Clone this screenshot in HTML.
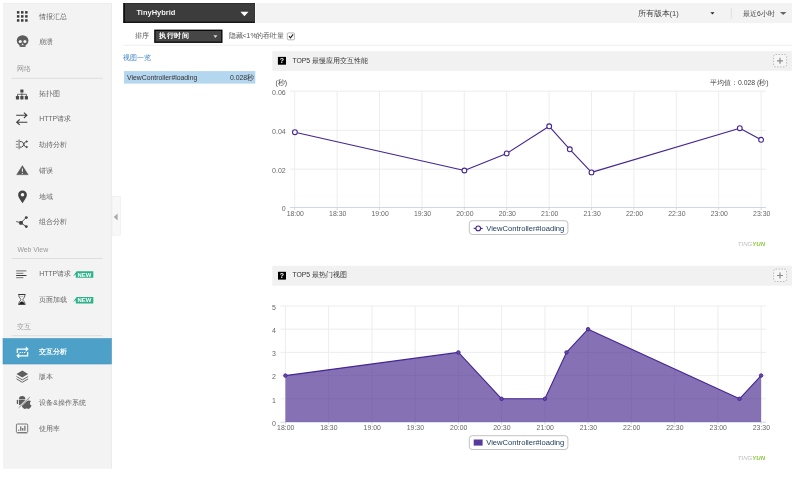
<!DOCTYPE html>
<html lang="zh">
<head>
<meta charset="utf-8">
<title>TinyHybrid</title>
<style>
html,body{margin:0;padding:0;background:#fff;}
body{width:796px;height:481px;overflow:hidden;position:relative;font-family:"Liberation Sans",sans-serif;font-size:6.85px;color:#666;}
#root{position:absolute;left:0;top:0;width:796px;height:481px;will-change:transform;}
.j{text-align:justify;text-align-last:justify;}
.a{position:absolute;white-space:nowrap;line-height:10px;height:10px;}
.nav{position:absolute;left:39.2px;white-space:nowrap;line-height:10px;height:10px;color:#666;font-size:6.85px;}
.sec{position:absolute;left:17.4px;white-space:nowrap;line-height:10px;height:10px;color:#999;font-size:6.85px;}
.ic{position:absolute;overflow:visible;}
.q{position:absolute;left:278px;width:8px;height:7.8px;color:#fff;font-weight:bold;font-size:7px;line-height:8px;text-align:center;}
svg text{font-family:"Liberation Sans",sans-serif;}
</style>
</head>
<body>
<div id="root">
<svg id="bg" class="ic" style="left:0;top:0" width="796" height="481" viewBox="0 0 796 481">
<rect x="3" y="3" width="109.00" height="465.80" fill="#f3f3f3" />
<rect x="3" y="3" width="109.00" height="0.70" fill="#ececec" />
<rect x="111.3" y="3" width="0.70" height="465.80" fill="#e9e9e9" />
<rect x="11.6" y="77.85" width="90.90" height="0.90" fill="#dcdcdc" />
<rect x="11.6" y="258.05" width="90.90" height="0.90" fill="#dcdcdc" />
<rect x="11.6" y="335.25" width="90.90" height="0.90" fill="#dcdcdc" />
<rect x="3" y="338.6" width="108.30" height="25.40" fill="#4da0c7" stroke="#3d92bf" stroke-width="0.6"/>
<rect x="112" y="196.4" width="8.40" height="38.80" fill="#f8f8f8" stroke="#ebebeb" stroke-width="0.6"/>
<rect x="123.4" y="3.1" width="668.70" height="20.00" fill="#f3f3f3" />
<rect x="255" y="3.1" width="0.90" height="20.00" fill="#fafafa" />
<rect x="123.4" y="3.0" width="131.50" height="19.80" fill="#3c3c3c" />
<rect x="123.4" y="3.0" width="1.40" height="19.80" fill="#050505" />
<rect x="123.4" y="21.7" width="131.50" height="1.10" fill="#050505" />
<rect x="123.4" y="3.0" width="131.50" height="0.50" fill="#222" />
<rect x="254.2" y="3.0" width="0.70" height="19.80" fill="#2a2a2a" />
<rect x="730.8" y="7.8" width="0.80" height="10.80" fill="#d9d9d9" />
<rect x="154.2" y="29.6" width="68.30" height="13.30" fill="#050505" />
<rect x="155.5" y="30.9" width="65.70" height="10.70" fill="#464646" />
<rect x="123.4" y="44.8" width="668.70" height="0.80" fill="#e9e9e9" />
<rect x="287.3" y="32.9" width="7.10" height="6.90" fill="#fdfdfd" stroke="#9a9a9a" stroke-width="0.7" rx="0.8"/>
<rect x="124" y="71.1" width="131.30" height="12.50" fill="#b4d6ef" />
<rect x="272.3" y="51.2" width="519.80" height="19.60" fill="#f1f1f1" />
<rect x="272.3" y="265.8" width="519.80" height="19.90" fill="#f1f1f1" />
<rect x="277.9" y="56.9" width="8.10" height="7.80" fill="#000" />
<rect x="278" y="271.8" width="8.00" height="7.80" fill="#000" />
<rect x="773.6" y="54.5" width="13" height="12.4" rx="2" fill="#f6f6f6" stroke="#a8a8a8" stroke-width="0.8" stroke-dasharray="1.4 1.5"/>
<rect x="773.6" y="269.09999999999997" width="13" height="12.4" rx="2" fill="#f6f6f6" stroke="#a8a8a8" stroke-width="0.8" stroke-dasharray="1.4 1.5"/>
</svg>
<!-- SIDEBAR -->

<div class="nav j" style="top:11.6px;width:26.9px">情报汇总</div>
<div class="nav j" style="top:37.3px;width:13.2px">崩溃</div>
<div class="sec j" style="top:64.1px;width:13.2px">网络</div>
<div class="nav j" style="top:88.6px;width:20.1px">拓扑图</div>
<div class="nav j" style="top:114.0px;width:31.1px">HTTP请求</div>
<div class="nav j" style="top:140.4px;width:27.1px">劫持分析</div>
<div class="nav j" style="top:165.8px;width:13.3px">错误</div>
<div class="nav j" style="top:191.9px;width:13.3px">地域</div>
<div class="nav j" style="top:217.4px;width:27.1px">组合分析</div>
<div class="sec" style="top:244.5px;font-size:6.9px">Web View</div>
<div class="nav j" style="top:268.8px;width:31.1px">HTTP请求</div>
<div class="nav j" style="top:295.0px;width:27.4px">页面加载</div>
<div class="sec j" style="top:322px;width:13.3px">交互</div>
<div class="nav j" style="top:346.5px;color:#fff;font-weight:bold;width:27.4px">交互分析</div>
<div class="nav j" style="top:372.2px;width:13.6px">版本</div>
<div class="nav j" style="top:397.7px;width:45.7px">设备&amp;操作系统</div>
<div class="nav j" style="top:423.7px;width:20.1px">使用率</div>

<!-- TOP BAR -->
<div class="a" style="left:136.4px;top:8.3px;color:#fff;font-weight:bold;font-size:7.5px;text-shadow:0 -0.5px 0 #000;">TinyHybrid</div>
<div class="a j" style="left:637.5px;top:8.9px;color:#444;font-size:7.5px;width:39.5px">所有版本(1)</div>
<div class="a j" style="left:743px;top:8.6px;color:#444;font-size:6.85px;width:30.5px">最近6小时</div>

<!-- FILTER ROW -->
<div class="a j" style="left:135px;top:31.2px;color:#555;width:13px">排序</div>
<div class="a j" style="left:159px;top:31.2px;color:#fff;font-weight:bold;font-size:7.4px;width:30px">执行时间</div>
<div class="a j" style="left:228.6px;top:31.2px;color:#555;width:55.2px">隐藏&lt;1%的吞吐量</div>

<!-- LIST -->
<div class="a j" style="left:123.4px;top:52.7px;color:#3d84c6;width:27.2px">视图一览</div>
<div class="a" style="left:127px;top:72.6px;color:#333;">ViewController#loading</div>
<div class="a j" style="left:230.0px;top:72.6px;color:#333;width:23.7px">0.028秒</div>

<!-- PANEL 1 -->
<div class="q" style="top:57px">?</div>
<div class="a j" style="left:292.4px;top:55.8px;color:#333;width:73.6px">TOP5 最慢应用交互性能</div>
<div class="a j" style="left:275.6px;top:77.6px;color:#444;width:10.8px">(秒)</div>
<div class="a j" style="left:710.0px;top:77.5px;color:#444;width:58px">平均值：0.028 (秒)</div>

<!-- PANEL 2 -->
<div class="q" style="top:271.8px">?</div>
<div class="a j" style="left:292.4px;top:270.2px;color:#333;width:53.5px">TOP5 最热门视图</div>

<svg id="g" class="ic" style="left:0;top:0" width="796" height="481" viewBox="0 0 796 481">
<g shape-rendering="auto">
<line x1="290" x2="766" y1="169.2" y2="169.2" stroke="#e9e9e9" stroke-width="0.8"/>
<line x1="290" x2="766" y1="130.3" y2="130.3" stroke="#e9e9e9" stroke-width="0.8"/>
<line x1="290" x2="766" y1="91.2" y2="91.2" stroke="#e9e9e9" stroke-width="0.8"/>
<line x1="294.7" x2="294.7" y1="91.2" y2="207.5" stroke="#e9e9e9" stroke-width="0.8"/>
<line x1="294.7" x2="294.7" y1="207.5" y2="210" stroke="#c0d0e0" stroke-width="0.7"/>
<line x1="337.1" x2="337.1" y1="91.2" y2="207.5" stroke="#e9e9e9" stroke-width="0.8"/>
<line x1="337.1" x2="337.1" y1="207.5" y2="210" stroke="#c0d0e0" stroke-width="0.7"/>
<line x1="379.5" x2="379.5" y1="91.2" y2="207.5" stroke="#e9e9e9" stroke-width="0.8"/>
<line x1="379.5" x2="379.5" y1="207.5" y2="210" stroke="#c0d0e0" stroke-width="0.7"/>
<line x1="421.9" x2="421.9" y1="91.2" y2="207.5" stroke="#e9e9e9" stroke-width="0.8"/>
<line x1="421.9" x2="421.9" y1="207.5" y2="210" stroke="#c0d0e0" stroke-width="0.7"/>
<line x1="464.3" x2="464.3" y1="91.2" y2="207.5" stroke="#e9e9e9" stroke-width="0.8"/>
<line x1="464.3" x2="464.3" y1="207.5" y2="210" stroke="#c0d0e0" stroke-width="0.7"/>
<line x1="506.7" x2="506.7" y1="91.2" y2="207.5" stroke="#e9e9e9" stroke-width="0.8"/>
<line x1="506.7" x2="506.7" y1="207.5" y2="210" stroke="#c0d0e0" stroke-width="0.7"/>
<line x1="549.1" x2="549.1" y1="91.2" y2="207.5" stroke="#e9e9e9" stroke-width="0.8"/>
<line x1="549.1" x2="549.1" y1="207.5" y2="210" stroke="#c0d0e0" stroke-width="0.7"/>
<line x1="591.5" x2="591.5" y1="91.2" y2="207.5" stroke="#e9e9e9" stroke-width="0.8"/>
<line x1="591.5" x2="591.5" y1="207.5" y2="210" stroke="#c0d0e0" stroke-width="0.7"/>
<line x1="633.9" x2="633.9" y1="91.2" y2="207.5" stroke="#e9e9e9" stroke-width="0.8"/>
<line x1="633.9" x2="633.9" y1="207.5" y2="210" stroke="#c0d0e0" stroke-width="0.7"/>
<line x1="676.3" x2="676.3" y1="91.2" y2="207.5" stroke="#e9e9e9" stroke-width="0.8"/>
<line x1="676.3" x2="676.3" y1="207.5" y2="210" stroke="#c0d0e0" stroke-width="0.7"/>
<line x1="718.7" x2="718.7" y1="91.2" y2="207.5" stroke="#e9e9e9" stroke-width="0.8"/>
<line x1="718.7" x2="718.7" y1="207.5" y2="210" stroke="#c0d0e0" stroke-width="0.7"/>
<line x1="761.1" x2="761.1" y1="91.2" y2="207.5" stroke="#e9e9e9" stroke-width="0.8"/>
<line x1="761.1" x2="761.1" y1="207.5" y2="210" stroke="#c0d0e0" stroke-width="0.7"/>
<line x1="290" x2="766" y1="207.5" y2="207.5" stroke="#c0d0e0" stroke-width="0.8"/>
<text x="295.3" y="215.5" text-anchor="middle" font-size="6.9" fill="#666">18:00</text>
<text x="337.7" y="215.5" text-anchor="middle" font-size="6.9" fill="#666">18:30</text>
<text x="380.1" y="215.5" text-anchor="middle" font-size="6.9" fill="#666">19:00</text>
<text x="422.5" y="215.5" text-anchor="middle" font-size="6.9" fill="#666">19:30</text>
<text x="464.9" y="215.5" text-anchor="middle" font-size="6.9" fill="#666">20:00</text>
<text x="507.3" y="215.5" text-anchor="middle" font-size="6.9" fill="#666">20:30</text>
<text x="549.7" y="215.5" text-anchor="middle" font-size="6.9" fill="#666">21:00</text>
<text x="592.1" y="215.5" text-anchor="middle" font-size="6.9" fill="#666">21:30</text>
<text x="634.5" y="215.5" text-anchor="middle" font-size="6.9" fill="#666">22:00</text>
<text x="676.9" y="215.5" text-anchor="middle" font-size="6.9" fill="#666">22:30</text>
<text x="719.3" y="215.5" text-anchor="middle" font-size="6.9" fill="#666">23:00</text>
<text x="761.7" y="215.5" text-anchor="middle" font-size="6.9" fill="#666">23:30</text>
<text x="285.7" y="211.0" text-anchor="end" font-size="7" fill="#666">0</text>
<text x="285.7" y="172.7" text-anchor="end" font-size="7" fill="#666">0.02</text>
<text x="285.7" y="133.8" text-anchor="end" font-size="7" fill="#666">0.04</text>
<text x="285.7" y="94.7" text-anchor="end" font-size="7" fill="#666">0.06</text>
<polyline points="294.9,132.2 464.4,170.5 506.7,153.4 549.2,126.3 569.8,149.3 591.5,172.4 739.8,128.2 761.1,139.8" fill="none" stroke="#442594" stroke-width="1.1" stroke-linejoin="round"/>
<circle cx="294.9" cy="132.2" r="2.4" fill="#fff" stroke="#442594" stroke-width="1.1"/>
<circle cx="464.4" cy="170.5" r="2.4" fill="#fff" stroke="#442594" stroke-width="1.1"/>
<circle cx="506.7" cy="153.4" r="2.4" fill="#fff" stroke="#442594" stroke-width="1.1"/>
<circle cx="549.2" cy="126.3" r="2.4" fill="#fff" stroke="#442594" stroke-width="1.1"/>
<circle cx="569.8" cy="149.3" r="2.4" fill="#fff" stroke="#442594" stroke-width="1.1"/>
<circle cx="591.5" cy="172.4" r="2.4" fill="#fff" stroke="#442594" stroke-width="1.1"/>
<circle cx="739.8" cy="128.2" r="2.4" fill="#fff" stroke="#442594" stroke-width="1.1"/>
<circle cx="761.1" cy="139.8" r="2.4" fill="#fff" stroke="#442594" stroke-width="1.1"/>
<rect x="469.3" y="220.7" width="98.6" height="13.8" rx="3" ry="3" fill="#fff" stroke="#a8a8a8" stroke-width="0.7"/>
<line x1="473.7" x2="482.7" y1="228.4" y2="228.4" stroke="#442594" stroke-width="1.1"/>
<circle cx="478.2" cy="228.4" r="2.35" fill="#fff" stroke="#442594" stroke-width="1.1"/>
<text x="486.2" y="230.8" font-size="7.62" fill="#23415f">ViewController#loading</text>
</g>
<g>
<line x1="280.5" x2="766" y1="398.8" y2="398.8" stroke="#e9e9e9" stroke-width="0.8"/>
<line x1="280.5" x2="766" y1="375.6" y2="375.6" stroke="#e9e9e9" stroke-width="0.8"/>
<line x1="280.5" x2="766" y1="352.4" y2="352.4" stroke="#e9e9e9" stroke-width="0.8"/>
<line x1="280.5" x2="766" y1="329.2" y2="329.2" stroke="#e9e9e9" stroke-width="0.8"/>
<line x1="280.5" x2="766" y1="306.0" y2="306.0" stroke="#e9e9e9" stroke-width="0.8"/>
<line x1="285.4" x2="285.4" y1="306" y2="422" stroke="#e9e9e9" stroke-width="0.8"/>
<line x1="285.4" x2="285.4" y1="422" y2="424.5" stroke="#c0d0e0" stroke-width="0.7"/>
<line x1="328.6" x2="328.6" y1="306" y2="422" stroke="#e9e9e9" stroke-width="0.8"/>
<line x1="328.6" x2="328.6" y1="422" y2="424.5" stroke="#c0d0e0" stroke-width="0.7"/>
<line x1="371.9" x2="371.9" y1="306" y2="422" stroke="#e9e9e9" stroke-width="0.8"/>
<line x1="371.9" x2="371.9" y1="422" y2="424.5" stroke="#c0d0e0" stroke-width="0.7"/>
<line x1="415.1" x2="415.1" y1="306" y2="422" stroke="#e9e9e9" stroke-width="0.8"/>
<line x1="415.1" x2="415.1" y1="422" y2="424.5" stroke="#c0d0e0" stroke-width="0.7"/>
<line x1="458.4" x2="458.4" y1="306" y2="422" stroke="#e9e9e9" stroke-width="0.8"/>
<line x1="458.4" x2="458.4" y1="422" y2="424.5" stroke="#c0d0e0" stroke-width="0.7"/>
<line x1="501.6" x2="501.6" y1="306" y2="422" stroke="#e9e9e9" stroke-width="0.8"/>
<line x1="501.6" x2="501.6" y1="422" y2="424.5" stroke="#c0d0e0" stroke-width="0.7"/>
<line x1="544.9" x2="544.9" y1="306" y2="422" stroke="#e9e9e9" stroke-width="0.8"/>
<line x1="544.9" x2="544.9" y1="422" y2="424.5" stroke="#c0d0e0" stroke-width="0.7"/>
<line x1="588.1" x2="588.1" y1="306" y2="422" stroke="#e9e9e9" stroke-width="0.8"/>
<line x1="588.1" x2="588.1" y1="422" y2="424.5" stroke="#c0d0e0" stroke-width="0.7"/>
<line x1="631.4" x2="631.4" y1="306" y2="422" stroke="#e9e9e9" stroke-width="0.8"/>
<line x1="631.4" x2="631.4" y1="422" y2="424.5" stroke="#c0d0e0" stroke-width="0.7"/>
<line x1="674.6" x2="674.6" y1="306" y2="422" stroke="#e9e9e9" stroke-width="0.8"/>
<line x1="674.6" x2="674.6" y1="422" y2="424.5" stroke="#c0d0e0" stroke-width="0.7"/>
<line x1="717.9" x2="717.9" y1="306" y2="422" stroke="#e9e9e9" stroke-width="0.8"/>
<line x1="717.9" x2="717.9" y1="422" y2="424.5" stroke="#c0d0e0" stroke-width="0.7"/>
<line x1="761.1" x2="761.1" y1="306" y2="422" stroke="#e9e9e9" stroke-width="0.8"/>
<line x1="761.1" x2="761.1" y1="422" y2="424.5" stroke="#c0d0e0" stroke-width="0.7"/>
<line x1="280.5" x2="766" y1="422.2" y2="422.2" stroke="#c0d0e0" stroke-width="0.8"/>
<polygon points="285.4,422 285.4,375.6 458.4,352.4 501.6,398.8 544.9,398.8 566.5,352.4 588.1,329.2 739.5,398.8 761.1,375.6 761.1,422" fill="#4b2d8f" fill-opacity="0.68"/>
<polyline points="285.4,375.6 458.4,352.4 501.6,398.8 544.9,398.8 566.5,352.4 588.1,329.2 739.5,398.8 761.1,375.6" fill="none" stroke="#442594" stroke-width="1.1" stroke-linejoin="round"/>
<circle cx="285.4" cy="375.6" r="1.75" fill="#6549a6" stroke="#442594" stroke-width="0.9"/>
<circle cx="458.4" cy="352.4" r="1.75" fill="#6549a6" stroke="#442594" stroke-width="0.9"/>
<circle cx="501.6" cy="398.8" r="1.75" fill="#6549a6" stroke="#442594" stroke-width="0.9"/>
<circle cx="544.9" cy="398.8" r="1.75" fill="#6549a6" stroke="#442594" stroke-width="0.9"/>
<circle cx="566.5" cy="352.4" r="1.75" fill="#6549a6" stroke="#442594" stroke-width="0.9"/>
<circle cx="588.1" cy="329.2" r="1.75" fill="#6549a6" stroke="#442594" stroke-width="0.9"/>
<circle cx="739.5" cy="398.8" r="1.75" fill="#6549a6" stroke="#442594" stroke-width="0.9"/>
<circle cx="761.1" cy="375.6" r="1.75" fill="#6549a6" stroke="#442594" stroke-width="0.9"/>
<text x="285.7" y="430.4" text-anchor="middle" font-size="6.9" fill="#666">18:00</text>
<text x="328.9" y="430.4" text-anchor="middle" font-size="6.9" fill="#666">18:30</text>
<text x="372.2" y="430.4" text-anchor="middle" font-size="6.9" fill="#666">19:00</text>
<text x="415.4" y="430.4" text-anchor="middle" font-size="6.9" fill="#666">19:30</text>
<text x="458.7" y="430.4" text-anchor="middle" font-size="6.9" fill="#666">20:00</text>
<text x="501.9" y="430.4" text-anchor="middle" font-size="6.9" fill="#666">20:30</text>
<text x="545.2" y="430.4" text-anchor="middle" font-size="6.9" fill="#666">21:00</text>
<text x="588.4" y="430.4" text-anchor="middle" font-size="6.9" fill="#666">21:30</text>
<text x="631.7" y="430.4" text-anchor="middle" font-size="6.9" fill="#666">22:00</text>
<text x="674.9" y="430.4" text-anchor="middle" font-size="6.9" fill="#666">22:30</text>
<text x="718.2" y="430.4" text-anchor="middle" font-size="6.9" fill="#666">23:00</text>
<text x="761.4" y="430.4" text-anchor="middle" font-size="6.9" fill="#666">23:30</text>
<text x="275.8" y="425.8" text-anchor="end" font-size="7" fill="#666">0</text>
<text x="275.8" y="402.6" text-anchor="end" font-size="7" fill="#666">1</text>
<text x="275.8" y="379.4" text-anchor="end" font-size="7" fill="#666">2</text>
<text x="275.8" y="356.2" text-anchor="end" font-size="7" fill="#666">3</text>
<text x="275.8" y="333.0" text-anchor="end" font-size="7" fill="#666">4</text>
<text x="275.8" y="309.8" text-anchor="end" font-size="7" fill="#666">5</text>
<rect x="469.3" y="435.7" width="98.6" height="13.8" rx="3" ry="3" fill="#fff" stroke="#a8a8a8" stroke-width="0.7"/>
<rect x="473.7" y="439.5" width="8.9" height="6.1" fill="#573a9b"/>
<text x="486.2" y="445.3" font-size="7.62" fill="#23415f">ViewController#loading</text>
</g>
<text x="737.8" y="245.7" font-size="6.05" font-style="italic" fill="#bdbdbd">TING<tspan fill="#8cc63f" font-weight="bold">YUN</tspan></text>
<text x="737.8" y="460.3" font-size="6.05" font-style="italic" fill="#bdbdbd">TING<tspan fill="#8cc63f" font-weight="bold">YUN</tspan></text>
<g fill="#3c3c3c">
<rect x="16.90" y="11.10" width="2.5" height="2.5"/>
<rect x="21.00" y="11.10" width="2.5" height="2.5"/>
<rect x="25.10" y="11.10" width="2.5" height="2.5"/>
<rect x="16.90" y="15.15" width="2.5" height="2.5"/>
<rect x="21.00" y="15.15" width="2.5" height="2.5"/>
<rect x="25.10" y="15.15" width="2.5" height="2.5"/>
<rect x="16.90" y="19.20" width="2.5" height="2.5"/>
<rect x="21.00" y="19.20" width="2.5" height="2.5"/>
<rect x="25.10" y="19.20" width="2.5" height="2.5"/>
</g>
<g>
<ellipse cx="22.600" cy="40.500" rx="5.850" ry="5.350" fill="#5c5c5c"/>
<rect x="19.500" y="43" width="6.200" height="4.100" rx="1" fill="#5c5c5c"/>
<circle cx="20.300" cy="41.500" r="1.550" fill="#f3f3f3"/><circle cx="24.900" cy="41.500" r="1.550" fill="#f3f3f3"/>
<path d="M22.600 43.300l1.050 1.800h-2.100z" fill="#f3f3f3"/>
<path d="M20.300 45.900h4.600" stroke="#999" stroke-width="0.5"/>
</g>
<g fill="#4a4a4a" stroke="none">
<rect x="20.3" y="89.6" width="3.2" height="3" rx="0.4"/>
<rect x="15.9" y="96" width="3.2" height="3.5" rx="0.4"/>
<rect x="20.3" y="96" width="3.2" height="3.5" rx="0.4"/>
<rect x="24.8" y="96" width="3.2" height="3.5" rx="0.4"/>
<path d="M21.9 92.5v3.5M17.5 96v-1.700h8.900v1.700" fill="none" stroke="#4a4a4a" stroke-width="0.8"/>
</g>
<g fill="none" stroke="#3c3c3c" stroke-width="1.05" stroke-linecap="butt" stroke-linejoin="miter">
<path d="M16.2 115.3h10.600M23.9 112.6l3 2.700l-3 2.700"/>
<path d="M27.300 122.2h-10.600M19.700 119.500l-3 2.700l3 2.700"/>
</g>
<g fill="none" stroke="#555" stroke-width="0.9">
<path d="M19.1 139.4v9.800" stroke="#777" stroke-width="1.1"/>
<path d="M15.900 141.4h2.300M15.900 144.3h2.300M15.900 147.200h2.300" stroke="#666" stroke-width="0.8"/>
<path d="M19.800 141.600h1.800c2.200 0 2.200 5.500 4.400 5.500h1.300M19.800 147.100h1.800c2.200 0 2.200-5.500 4.400-5.500h1.300" stroke="#444" stroke-width="1"/>
<path d="M26.300 140.100l1.700 1.500l-1.700 1.500zM26.300 145.600l1.700 1.500l-1.700 1.500z" fill="#444" stroke="none"/>
</g>
<path d="M22.4 165.500l5.900 9.300h-11.800z" fill="#585858" stroke="#585858" stroke-width="0.3" stroke-linejoin="round"/>
<path d="M22.4 168.500v3.300" stroke="#f3f3f3" stroke-width="1.1"/><circle cx="22.4" cy="173.300" r="0.6" fill="#f3f3f3"/>
<path d="M22.5 190.600c-2.500 0-4.400 1.900-4.400 4.300c0 2.800 2.900 5.400 4.400 8.300c1.500-2.900 4.400-5.500 4.400-8.300c0-2.400-1.900-4.300-4.400-4.300z" fill="#444"/>
<circle cx="22.5" cy="194.700" r="1.750" fill="#f6f6f6"/>
<g fill="#444" stroke="#444" stroke-width="0.9">
<path d="M16.300 221.500l3 0.900M21 222.800l5.200-5.300M21 222.800l5.200 3.800" fill="none"/>
<rect x="19.100" y="220.900" width="3.800" height="3.800" rx="1.200" stroke="none"/><circle cx="26.300" cy="217.600" r="1.450" stroke="none"/><circle cx="26.300" cy="226.600" r="1.450" stroke="none"/>
</g>
<g stroke-width="0.9" fill="none">
<path d="M16.200 270.900h10.200" stroke="#606060"/><path d="M16.200 273.300h7.200" stroke="#6a6a6a"/><path d="M16.200 275.500h10.200" stroke="#222"/><path d="M16.200 277.700h7.200" stroke="#6a6a6a"/>
</g>
<g>
<path d="M18.900 294.600h5.900v1.200c0 2-2 2.600-2 3.800s2 1.800 2 3.800v0.800h-5.900v-0.800c0-2 2-2.600 2-3.800s-2-1.800-2-3.800z" fill="#fff" stroke="#2a2a2a" stroke-width="0.75" stroke-linejoin="round"/>
<path d="M18.200 294.500h7.300M18.200 304.300h7.300" stroke="#2a2a2a" stroke-width="0.85"/>
<path d="M21.850 301.200c1.200 0.400 2.400 1.300 2.500 2.700h-5c0.100-1.400 1.300-2.300 2.500-2.700z" fill="#222"/>
<path d="M20.300 296.700h3.100" stroke="#666" stroke-width="0.55"/>
</g>
<g fill="none" stroke="#fff" stroke-width="1.25">
<path d="M17.300 353v-3.900h9.400"/><path d="M26.100 346.900l2.200 2.200l-2.200 2.200z" fill="#fff" stroke-width="0.6"/>
<path d="M27.600 352v3.800h-9.200"/><path d="M18.900 353.600l-2.200 2.200l2.200 2.200z" fill="#fff" stroke-width="0.6"/>
<path d="M19.700 352.450h1.200M21.850 352.450h1.200M24 352.450h1.200" stroke-width="1.100"/>
</g>
<g>
<path d="M22.300 370.400l5.800 3.500l-5.800 3.500l-5.800-3.500z" fill="#5e5e5e"/>
<path d="M16.500 376.500l5.800 3.400l5.800-3.400M16.500 378.900l5.800 3.400l5.800-3.400" fill="none" stroke="#666" stroke-width="1"/>
</g>
<g>
<clipPath id="cA"><path d="M14 393h18.700l-2.900 2.800l-13.800 13.300h-2z"/></clipPath>
<g clip-path="url(#cA)" fill="#5c5c5c">
<path d="M18.900 399.300a3.250 3.400 0 0 1 6.500 0z"/>
<rect x="18.900" y="399.700" width="6.500" height="5.400" rx="0.7"/>
<rect x="16.800" y="399.800" width="1.300" height="4.200" rx="0.6"/>
</g>
<clipPath id="cB"><path d="M33 395.300l-15.300 14.700h17v-14.700z"/></clipPath>
<g clip-path="url(#cB)" fill="#5c5c5c">
<path d="M27 401c1.200-0.800 2.900-0.900 4 0.200c-1.600 1-1.500 3.600 0.500 4.400c-0.600 1.800-1.700 3.300-3 3.300c-0.800 0-1-0.400-1.900-0.400s-1.200 0.400-1.900 0.400c-1.500 0-3.700-3.100-3.700-5.600c0-2.800 2.800-3.900 4.600-2.700c0.500 0.300 0.900 0.500 1.400 0.400z"/>
<path d="M27 400.500c-0.100-1.300 0.900-2.500 2.200-2.600c0.200 1.300-0.900 2.500-2.200 2.600z"/>
</g>
<path d="M29.900 397l-11.200 10.800" stroke="#6a6a6a" stroke-width="0.7"/>
</g>
<g fill="none" stroke="#5a5a5a">
<rect x="16.400" y="424" width="11.300" height="8.500" rx="1" stroke-width="0.8"/>
<path d="M16.800 433.200h10.500" stroke="#777" stroke-width="0.6"/>
<path d="M18.700 429.800v0.900" stroke-width="1.100"/><path d="M20.800 426.400v4.300" stroke-width="1.100"/><path d="M22.800 428v2.700" stroke-width="1.100"/><path d="M24.900 425.800v4.900" stroke-width="1.100"/>
</g>
<path d="M240.4 11.800h8.100l-4.050 4.500z" fill="#fff"/>
<path d="M213.400 35.300h4l-2 2.600z" fill="#d8d8d8"/>
<path d="M710.400 12.200h4.100l-2.050 2.300z" fill="#222"/>
<path d="M779.900 11.900h6.600l-3.300 3.200z" fill="#666"/>
<path d="M289 36.200l1.500 1.700l2.600-3.500" fill="none" stroke="#222" stroke-width="1.100"/>
<path d="M117.600 213.400v7l-3.900-3.500z" fill="#aaa"/>
<path d="M777 60.8h6M780 57.8v6" stroke="#8a8a8a" stroke-width="1.200" fill="none"/>
<path d="M777 275.5h6M780 272.5v6" stroke="#8a8a8a" stroke-width="1.200" fill="none"/>
<path d="M73 276.3L76.700 271.2H93.300V277.7H75.800V274.6z" fill="#2bb288"/>
<text x="77.500" y="276.5" font-size="5.600" font-weight="bold" fill="#fff" textLength="13.800" lengthAdjust="spacingAndGlyphs">NEW</text>
<path d="M73 302.0L76.700 296.9H93.300V303.4H75.800V300.3z" fill="#2bb288"/>
<text x="77.500" y="302.2" font-size="5.600" font-weight="bold" fill="#fff" textLength="13.800" lengthAdjust="spacingAndGlyphs">NEW</text>
</svg>
</div>
</body>
</html>
